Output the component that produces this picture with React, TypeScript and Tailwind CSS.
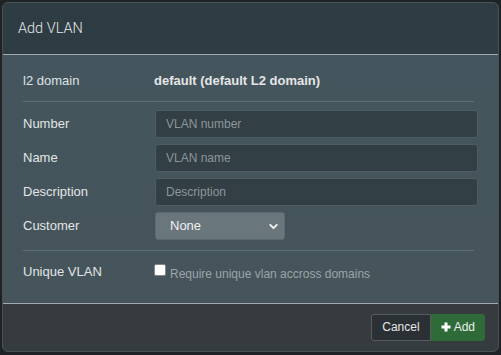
import { ChevronDown } from "lucide-react";

export default function App() {
  const fields = [
    { label: "Number", placeholder: "VLAN number" },
    { label: "Name", placeholder: "VLAN name" },
    { label: "Description", placeholder: "Description" },
  ];

  return (
    <div className="w-[501px] h-[355px] bg-[#1e2326] p-[2px] pb-[3px] font-['Liberation_Sans',Arial,sans-serif] text-[13px]">
      <div className="h-full flex flex-col rounded-md overflow-hidden border border-[#4b5256] bg-[#43545c]">
        {/* Header */}
        <div className="h-[52px] shrink-0 bg-[#2e3c43] border-b border-[#a3aaad] flex items-center px-[15px]">
          <h4 className="font-['Roboto',sans-serif] text-[14.5px] font-light text-[#e6e8e9]">Add VLAN</h4>
        </div>

        {/* Body */}
        <div className="flex-1 bg-gradient-to-b from-[#44555d] to-[#46545b] px-[20px] pt-[14px]">
          <div className="flex items-center h-[24px]">
            <span className="w-[131px] text-[#dfe3e5]">l2 domain</span>
            <span className="font-bold text-[#e4e6e7]">default (default L2 domain)</span>
          </div>
          <div className="h-px bg-[#5d6d74] mt-[8px] mb-[8px] mr-[4px]" />

          <div className="flex flex-col gap-[6px]">
            {fields.map((f) => (
              <div key={f.label} className="flex items-center">
                <span className="w-[132px] text-[#e2e5e6]">{f.label}</span>
                <input
                  placeholder={f.placeholder}
                  className="flex-1 h-[28px] rounded-[3px] border border-[#4e5c62] bg-[#323f45] px-[10px] text-[12px] text-[#ddd] placeholder:text-[#8c969a] outline-none"
                />
              </div>
            ))}
            <div className="flex items-center">
              <span className="w-[132px] text-[#e2e5e6]">Customer</span>
              <div className="w-[130px] h-[28px] rounded-[3px] border border-[#5c6a70] bg-[#69767c] flex items-center justify-between pl-[14px] pr-[4px] text-[#f0f1f2]">
                <span>None</span>
                <ChevronDown className="w-[13px] h-[13px]" strokeWidth={3.5} />
              </div>
            </div>
          </div>

          <div className="h-px bg-[#5d6d74] mt-[10px] mr-[4px]" />

          <div className="flex items-start pt-[11px]">
            <span className="w-[131px] text-[#e2e5e6]">Unique VLAN</span>
            <label className="flex items-start gap-[4px] text-[12px] text-[#9ba5a9]">
              <span className="mt-[2px] w-[12px] h-[12px] rounded-[2px] bg-white border border-[#888]" />
              <span className="mt-[3px]">Require unique vlan accross domains</span>
            </label>
          </div>
        </div>

        {/* Footer */}
        <div className="h-[48px] shrink-0 bg-[#353b3f] border-t border-[#a3aaad] flex items-center justify-end px-[13px] pb-[1px]">
          <div className="flex h-[27px]">
            <button className="px-[10px] rounded-l-[3px] border border-[#555d61] bg-[#2a3034] text-[#e5e7e8] text-[12px]">Cancel</button>
            <button className="px-[9px] rounded-r-[3px] bg-[#2f6b38] text-[#e9f0ea] text-[12px] flex items-center gap-[3px] border border-[#2f6b38]">
              <svg width="10" height="10" viewBox="0 0 10 10">
                <path d="M5 0.5v9M0.5 5h9" stroke="#ffffff" strokeWidth="3" />
              </svg>
              Add
            </button>
          </div>
        </div>
      </div>
    </div>
  );
}
